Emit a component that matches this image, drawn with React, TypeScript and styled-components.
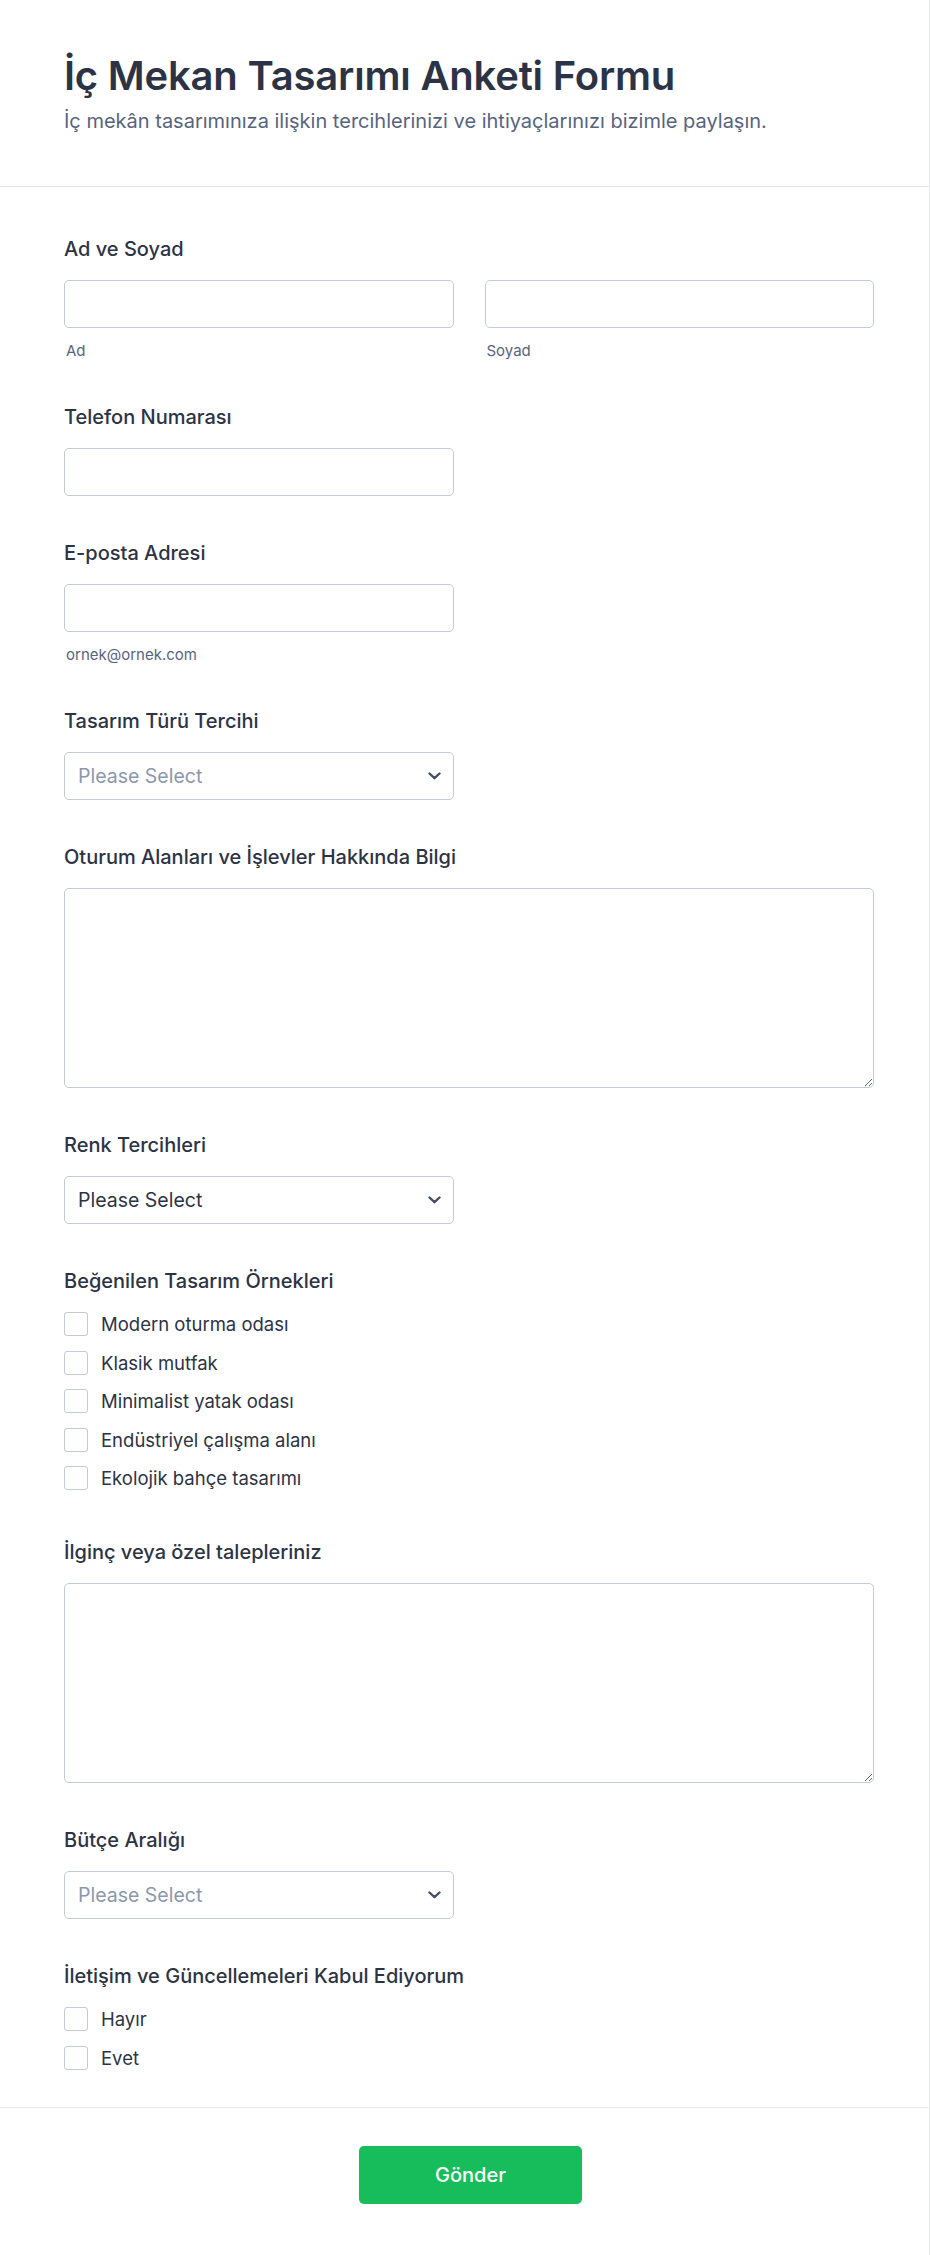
import styled, { createGlobalStyle } from "styled-components";

const GlobalStyle = createGlobalStyle`
  body {
    margin: 0;
    background: #ffffff;
    font-family: Inter, "Noto Sans", sans-serif;
    color: #2c3345;
  }
  * {
    box-sizing: border-box;
  }
`;

const Chevron = () => (
  <svg width="13" height="8" viewBox="0 0 13 8" fill="none">
    <path
      d="M1.5 1.5L6.5 6.2L11.5 1.5"
      stroke="#444f68"
      strokeWidth="2.4"
      strokeLinecap="round"
      strokeLinejoin="round"
    />
  </svg>
);

const designOptions = [
  "Modern oturma odası",
  "Klasik mutfak",
  "Minimalist yatak odası",
  "Endüstriyel çalışma alanı",
  "Ekolojik bahçe tasarımı",
];

const App = () => {
  return (
    <>
      <GlobalStyle />
      <Card>
        <Header>
          <Title>İç Mekan Tasarımı Anketi Formu</Title>
          <Subtitle>
            İç mekân tasarımınıza ilişkin tercihlerinizi ve ihtiyaçlarınızı bizimle paylaşın.
          </Subtitle>
        </Header>

        <FormBody>
          <Field>
            <Label>Ad ve Soyad</Label>
            <NameRow>
              <div>
                <TextInput type="text" />
                <SubLabel>Ad</SubLabel>
              </div>
              <div>
                <TextInput type="text" />
                <SubLabel>Soyad</SubLabel>
              </div>
            </NameRow>
          </Field>

          <Field>
            <Label>Telefon Numarası</Label>
            <TextInput type="tel" $half />
          </Field>

          <Field>
            <Label>E-posta Adresi</Label>
            <TextInput type="email" $half />
            <SubLabel>ornek@ornek.com</SubLabel>
          </Field>

          <Field>
            <Label>Tasarım Türü Tercihi</Label>
            <SelectWrap>
              <Select defaultValue="" $placeholder>
                <option value="">Please Select</option>
              </Select>
              <ArrowBox>
                <Chevron />
              </ArrowBox>
            </SelectWrap>
          </Field>

          <Field>
            <Label>Oturum Alanları ve İşlevler Hakkında Bilgi</Label>
            <TextArea />
          </Field>

          <Field>
            <Label>Renk Tercihleri</Label>
            <SelectWrap>
              <Select defaultValue="">
                <option value="">Please Select</option>
              </Select>
              <ArrowBox>
                <Chevron />
              </ArrowBox>
            </SelectWrap>
          </Field>

          <Field>
            <Label>Beğenilen Tasarım Örnekleri</Label>
            <CheckList>
              {designOptions.map((opt) => (
                <CheckRow key={opt}>
                  <CheckBox type="checkbox" />
                  <CheckText>{opt}</CheckText>
                </CheckRow>
              ))}
            </CheckList>
          </Field>

          <Field>
            <Label>İlginç veya özel talepleriniz</Label>
            <TextArea />
          </Field>

          <Field>
            <Label>Bütçe Aralığı</Label>
            <SelectWrap>
              <Select defaultValue="" $placeholder>
                <option value="">Please Select</option>
              </Select>
              <ArrowBox>
                <Chevron />
              </ArrowBox>
            </SelectWrap>
          </Field>

          <Field>
            <Label>İletişim ve Güncellemeleri Kabul Ediyorum</Label>
            <CheckList>
              <CheckRow>
                <CheckBox type="checkbox" />
                <CheckText>Hayır</CheckText>
              </CheckRow>
              <CheckRow>
                <CheckBox type="checkbox" />
                <CheckText>Evet</CheckText>
              </CheckRow>
            </CheckList>
          </Field>
        </FormBody>

        <Footer>
          <SubmitButton type="button">Gönder</SubmitButton>
        </Footer>
      </Card>
    </>
  );
};

export default App;

const Card = styled.div`
  width: 930px;
  background: #ffffff;
  border-right: 1px solid #e6e8ef;
`;

const Header = styled.header`
  padding: 52px 55px 51px 64px;
  border-bottom: 1px solid #e1e3ee;
`;

const Title = styled.h1`
  margin: 0;
  font-size: 40px;
  line-height: 48px;
  font-weight: 600;
  color: #2c3345;
  letter-spacing: -0.2px;
`;

const Subtitle = styled.p`
  margin: 8px 0 0;
  font-size: 20px;
  line-height: 27px;
  color: #57647e;
`;

const FormBody = styled.div`
  display: flex;
  flex-direction: column;
  gap: 45px;
  padding: 50px 55px 32px 64px;
  border-bottom: 1px solid #e8eaf2;
`;

const Field = styled.div`
  display: flex;
  flex-direction: column;
`;

const Label = styled.label`
  font-size: 20px;
  line-height: 25px;
  font-weight: 500;
  color: #2c3345;
  margin-bottom: 18px;
`;

const NameRow = styled.div`
  display: grid;
  grid-template-columns: 1fr 1fr;
  gap: 31px;
`;

const TextInput = styled.input<{ $half?: boolean }>`
  display: block;
  width: ${({ $half }) => ($half ? "390px" : "100%")};
  height: 48px;
  border: 1px solid #c3cad8;
  border-radius: 5px;
  padding: 0 13px;
  font-family: Inter, sans-serif;
  font-size: 19.5px;
  color: #2c3345;
  background: #ffffff;
  outline: none;
`;

const SubLabel = styled.div`
  margin-top: 13px;
  margin-left: 2px;
  font-size: 15px;
  line-height: 19px;
  color: #57647e;
`;

const SelectWrap = styled.div`
  position: relative;
  width: 390px;
`;

const Select = styled.select<{ $placeholder?: boolean }>`
  appearance: none;
  -webkit-appearance: none;
  display: block;
  width: 100%;
  height: 48px;
  border: 1px solid #c3cad8;
  border-radius: 5px;
  padding: 0 40px 0 13px;
  font-family: Inter, sans-serif;
  font-size: 19.5px;
  color: ${({ $placeholder }) => ($placeholder ? "#8c97ad" : "#2c3345")};
  background: #ffffff;
  outline: none;
`;

const ArrowBox = styled.span`
  position: absolute;
  right: 13px;
  top: 50%;
  transform: translateY(-50%);
  display: flex;
  pointer-events: none;
`;

const TextArea = styled.textarea`
  display: block;
  width: 100%;
  height: 200px;
  border: 1px solid #c3cad8;
  border-radius: 5px;
  padding: 10px 13px;
  font-family: Inter, sans-serif;
  font-size: 19.5px;
  color: #2c3345;
  outline: none;
  resize: vertical;
`;

const CheckList = styled.div`
  display: flex;
  flex-direction: column;
  gap: 14.5px;
  padding-bottom: 5px;
`;

const CheckRow = styled.label`
  display: flex;
  align-items: center;
  gap: 13px;
  height: 24px;
`;

const CheckBox = styled.input`
  appearance: none;
  -webkit-appearance: none;
  margin: 0;
  width: 24px;
  height: 24px;
  flex-shrink: 0;
  border: 1px solid #c3cad8;
  border-radius: 3px;
  background: #ffffff;
`;

const CheckText = styled.span`
  font-size: 18.5px;
  line-height: 24px;
  color: #2c3345;
`;

const Footer = styled.div`
  display: flex;
  justify-content: center;
  padding: 38px 0 51px 12px;
`;

const SubmitButton = styled.button`
  width: 223px;
  height: 58px;
  border: none;
  border-radius: 5px;
  background: #18bd5b;
  color: #ffffff;
  font-family: Inter, sans-serif;
  font-size: 20px;
  font-weight: 500;
  cursor: pointer;
`;
